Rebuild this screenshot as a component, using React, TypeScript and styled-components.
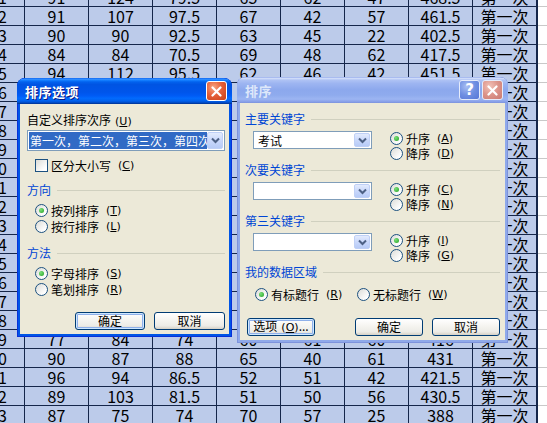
import React from 'react';
import styled, { createGlobalStyle, css } from 'styled-components';

const GlobalStyle = createGlobalStyle`
  *, *::before, *::after { box-sizing: border-box; }
  html, body { margin: 0; padding: 0; background: #fff; overflow: hidden; }
  body { font-family: "Noto Sans CJK SC", "Noto Sans", sans-serif; }
`;

const Screen = styled.div`
  position: relative;
  width: 547px;
  height: 423px;
  overflow: hidden;
  background: #fff;
`;

/* ---------- spreadsheet behind the dialogs ---------- */

const Sheet = styled.div`
  display: grid;
  grid-template-columns: 25px repeat(7, 64px) 65px 1fr;
  grid-auto-rows: 19px;
  margin-top: -12px;
  font-family: "Noto Sans CJK SC", sans-serif;
  font-size: 16px;
  color: #000;
`;

const Cell = styled.div<{ $lead?: boolean; $last?: boolean }>`
  display: flex;
  align-items: center;
  justify-content: ${p => (p.$lead ? 'flex-start' : 'center')};
  background: #bccbea;
  border-right: ${p => (p.$last ? 2 : 1)}px solid #15264a;
  border-bottom: 1px solid #15264a;
  line-height: 18px;
  overflow: hidden;
  white-space: nowrap;
`;

const RowNo = styled.span`
  margin-left: -2px;
`;

const Blank = styled.div`
  background: #fff;
  border-bottom: 1px solid #c9c9c9;
`;

/* ---------- XP style windows ---------- */

const Window = styled.div<{ $active?: boolean; $x: number; $y: number; $w: number; $h: number }>`
  position: absolute;
  left: ${p => p.$x}px;
  top: ${p => p.$y}px;
  width: ${p => p.$w}px;
  height: ${p => p.$h}px;
  display: flex;
  flex-direction: column;
  padding: 0 3px 3px;
  border-radius: 8px 8px 0 0;
  overflow: hidden;
  background: ${p => (p.$active ? '#0055e5' : '#8fa9ea')};
  box-shadow: inset 0 0 0 1px ${p => (p.$active ? '#0831d9' : '#7d93dc')};
  font-size: 12px;
  color: #000;
`;

const TitleBar = styled.div<{ $active?: boolean }>`
  height: 26px;
  margin: 0 -3px;
  padding: 0 5px 0 8px;
  display: flex;
  align-items: center;
  gap: 2px;
  border-radius: 8px 8px 0 0;
  background: ${p =>
    p.$active
      ? 'linear-gradient(180deg, #0058ee 0%, #3a93ff 4%, #127dff 9%, #0262ee 15%, #0054e3 25%, #0055eb 55%, #005bf5 68%, #026afe 78%, #0062ef 87%, #0052d6 93%, #0040ab 97%, #003092 100%)'
      : 'linear-gradient(180deg, #8fa6ea 0%, #d2defa 5%, #aec2f4 12%, #9db5f1 25%, #8ca8ed 50%, #8fabee 70%, #9cb5f2 85%, #8aa2ea 94%, #7c92dc 100%)'};
`;

const Title = styled.span<{ $active?: boolean }>`
  flex: 1;
  font-size: 13px;
  font-weight: bold;
  color: ${p => (p.$active ? '#fff' : '#dde7fa')};
  text-shadow: ${p => (p.$active ? '1px 1px 0 #0a1883' : 'none')};
  letter-spacing: 0.5px;
`;

const CaptionButton = styled.div<{ $kind: 'close' | 'closeDim' | 'help' }>`
  width: 21px;
  height: 20px;
  display: flex;
  align-items: center;
  justify-content: center;
  border: 1px solid ${p => (p.$kind === 'close' ? '#fff' : '#e6ecfb')};
  border-radius: 3px;
  color: #fff;
  font-family: "DejaVu Sans", sans-serif;
  font-weight: bold;
  font-size: 15px;
  ${p =>
    p.$kind === 'close'
      ? css`background: radial-gradient(circle at 35% 30%, #f7a582 0%, #e5603a 45%, #c93f17 100%);`
      : p.$kind === 'closeDim'
      ? css`background: radial-gradient(circle at 35% 30%, #f2c2b8 0%, #dc9389 50%, #c97a72 100%);`
      : css`background: radial-gradient(circle at 35% 30%, #a9bff3 0%, #6f8fe2 50%, #5676d6 100%);`}
`;

const XIcon = () => (
  <svg width="11" height="11" viewBox="0 0 11 11">
    <path d="M1.5 1.5 L9.5 9.5 M9.5 1.5 L1.5 9.5" stroke="#fff" strokeWidth="2.2" strokeLinecap="round" />
  </svg>
);

const Body = styled.div<{ $pad: string }>`
  flex: 1;
  display: flex;
  flex-direction: column;
  background: #ece9d8;
  padding: ${p => p.$pad};
`;

const Label = styled.div<{ $mt?: number }>`
  height: 14px;
  line-height: 14px;
  margin-top: ${p => p.$mt ?? 0}px;
  white-space: nowrap;
`;

const GroupHeader = styled.div<{ $mt?: number }>`
  display: flex;
  align-items: center;
  height: 14px;
  line-height: 14px;
  margin-top: ${p => p.$mt ?? 0}px;
  color: #0046d5;
  white-space: nowrap;
  &::after {
    content: '';
    flex: 1;
    height: 1px;
    margin-left: 6px;
    background: #d0d0bf;
  }
`;

const Combo = styled.div<{ $w: number; $h: number; $mt?: number; $ml?: number }>`
  display: flex;
  width: ${p => p.$w}px;
  height: ${p => p.$h}px;
  margin-top: ${p => p.$mt ?? 0}px;
  margin-left: ${p => p.$ml ?? 0}px;
  padding: 1px;
  border: 1px solid #7f9db9;
  background: #fff;
  flex-shrink: 0;
`;

const ComboText = styled.div<{ $sel?: boolean }>`
  flex: 1;
  display: flex;
  align-items: center;
  padding-left: ${p => (p.$sel ? 1 : 3)}px;
  overflow: hidden;
  white-space: nowrap;
  background: ${p => (p.$sel ? '#316ac5' : 'transparent')};
  color: ${p => (p.$sel ? '#fff' : '#000')};
`;

const ComboButton = styled.div`
  width: 16px;
  flex-shrink: 0;
  display: flex;
  align-items: center;
  justify-content: center;
  border: 1px solid #bfd0f6;
  border-radius: 2px;
  background: linear-gradient(180deg, #e3ebfd 0%, #c9d8fb 50%, #b7cbf7 100%);
`;

const Chevron = () => (
  <svg width="9" height="7" viewBox="0 0 9 7">
    <path d="M1 1.5 L4.5 5 L8 1.5" fill="none" stroke="#4d6185" strokeWidth="2" />
  </svg>
);

const OptionRow = styled.div<{ $mt?: number; $ml?: number }>`
  display: flex;
  align-items: center;
  gap: 3px;
  height: 14px;
  margin-top: ${p => p.$mt ?? 0}px;
  margin-left: ${p => p.$ml ?? 0}px;
  white-space: nowrap;
`;

const Radio = styled.span<{ $on?: boolean }>`
  width: 13px;
  height: 13px;
  flex-shrink: 0;
  display: flex;
  align-items: center;
  justify-content: center;
  border: 1px solid #1c5180;
  border-radius: 50%;
  background: linear-gradient(135deg, #dcdcd7 0%, #fff 80%);
  &::after {
    content: '';
    width: 5px;
    height: 5px;
    border-radius: 50%;
    background: ${p => (p.$on ? 'radial-gradient(circle at 35% 35%, #7be07a, #21a121)' : 'transparent')};
  }
`;

const Check = styled.span`
  width: 13px;
  height: 13px;
  flex-shrink: 0;
  border: 1px solid #1c5180;
  background: linear-gradient(135deg, #dcdcd7 0%, #fff 80%);
`;

const ButtonRow = styled.div<{ $mt: number; $split?: boolean }>`
  display: flex;
  justify-content: ${p => (p.$split ? 'space-between' : 'flex-end')};
  margin-top: ${p => p.$mt}px;
  padding-left: ${p => (p.$split ? 2 : 0)}px;
`;

const ButtonGroup = styled.div`
  display: flex;
  gap: 9px;
`;

const Button = styled.button<{ $w: number; $focus?: boolean }>`
  width: ${p => p.$w}px;
  height: 18px;
  padding: 0;
  font: inherit;
  font-size: 12px;
  line-height: 14px;
  color: #000;
  border: 1px solid #003c74;
  border-radius: 3px;
  background: linear-gradient(180deg, #ffffff 0%, #f4f3ee 50%, #ecebe6 80%, #d6d0c5 100%);
  ${p => p.$focus && css`box-shadow: inset 0 0 0 1px #cee7ff, inset 0 0 0 2px #8fb0ea;`}
`;

const KeyRow = styled.div`
  display: flex;
  align-items: flex-start;
  margin-top: 5px;
`;

const RadioCol = styled.div`
  display: flex;
  flex-direction: column;
  gap: 1px;
  margin-left: 18px;
`;

const InlineOptions = styled.div`
  display: flex;
  margin-top: 8px;
  margin-left: 10px;
`;

const OptionSlot = styled.div<{ $w: number }>`
  width: ${p => p.$w}px;
`;

const Mnemonic = styled.span`
  margin-left: 4px;
  font-family: "DejaVu Sans", sans-serif;
  font-size: 11px;
  letter-spacing: 0;
  u {
    text-underline-offset: 1px;
  }
`;

const Key = ({ k }: { k: string }) => (
  <Mnemonic>
    (<u>{k}</u>)
  </Mnemonic>
);

/* ---------- data ---------- */

const rows: number[][] = [
  [91, 124, 79.5, 65, 62, 47, 468.5],
  [91, 107, 97.5, 67, 42, 57, 461.5],
  [90, 90, 92.5, 63, 45, 22, 402.5],
  [84, 84, 70.5, 69, 48, 62, 417.5],
  [94, 112, 95.5, 62, 46, 42, 451.5],
  [88, 96, 90, 66, 52, 55, 447],
  [79, 101, 84.5, 58, 49, 60, 431.5],
  [93, 88, 91, 70, 44, 51, 437],
  [86, 99, 77.5, 61, 53, 48, 424.5],
  [92, 110, 89, 64, 47, 58, 460],
  [81, 93, 82.5, 59, 50, 46, 411.5],
  [95, 105, 93, 68, 55, 52, 468],
  [83, 91, 76, 62, 41, 49, 402],
  [89, 98, 87.5, 57, 54, 63, 448.5],
  [78, 86, 80, 60, 46, 44, 394],
  [90, 104, 85.5, 65, 51, 59, 454.5],
  [85, 97, 88, 63, 48, 50, 431],
  [87, 92, 79.5, 66, 43, 57, 424.5],
  [77, 84, 74, 60, 61, 60, 416],
  [90, 87, 88, 65, 40, 61, 431],
  [96, 94, 86.5, 52, 51, 42, 421.5],
  [89, 103, 81.5, 51, 50, 56, 430.5],
  [87, 75, 74, 70, 57, 25, 388],
];

export default function App() {
  return (
    <Screen>
      <GlobalStyle />
      <Sheet>
        {rows.map((r, i) => (
          <React.Fragment key={i}>
            <Cell $lead>
              <RowNo>{(i + 1) % 10}</RowNo>
            </Cell>
            {r.map((v, j) => (
              <Cell key={j}>{v}</Cell>
            ))}
            <Cell $last>第一次</Cell>
            <Blank />
          </React.Fragment>
        ))}
      </Sheet>

      {/* 排序选项 */}
      <Window $active $x={17} $y={78} $w={215} $h={259}>
        <TitleBar $active>
          <Title $active>排序选项</Title>
          <CaptionButton $kind="close">
            <XIcon />
          </CaptionButton>
        </TitleBar>
        <Body $pad="9px 4px 4px 7px">
          <Label>
            自定义排序次序<Key k="U" />
          </Label>
          <Combo $w={198} $h={21} $mt={3}>
            <ComboText $sel>第一次，第二次，第三次，第四次</ComboText>
            <ComboButton>
              <Chevron />
            </ComboButton>
          </Combo>
          <OptionRow $mt={7} $ml={8}>
            <Check />
            区分大小写<Key k="C" />
          </OptionRow>
          <GroupHeader $mt={11}>方向</GroupHeader>
          <OptionRow $mt={6} $ml={8}>
            <Radio $on />
            按列排序<Key k="T" />
          </OptionRow>
          <OptionRow $mt={2} $ml={8}>
            <Radio />
            按行排序<Key k="L" />
          </OptionRow>
          <GroupHeader $mt={13}>方法</GroupHeader>
          <OptionRow $mt={6} $ml={8}>
            <Radio $on />
            字母排序<Key k="S" />
          </OptionRow>
          <OptionRow $mt={2} $ml={8}>
            <Radio />
            笔划排序<Key k="R" />
          </OptionRow>
          <ButtonRow $mt={16}>
            <ButtonGroup>
              <Button $w={70} $focus>确定</Button>
              <Button $w={71}>取消</Button>
            </ButtonGroup>
          </ButtonRow>
        </Body>
      </Window>

      {/* 排序 */}
      <Window $x={237} $y={77} $w={271} $h={266}>
        <TitleBar>
          <Title>排序</Title>
          <CaptionButton $kind="help">?</CaptionButton>
          <CaptionButton $kind="closeDim">
            <XIcon />
          </CaptionButton>
        </TitleBar>
        <Body $pad="9px 5px 4px 5px">
          <GroupHeader>主要关键字</GroupHeader>
          <KeyRow>
            <Combo $w={119} $h={18} $ml={8}>
              <ComboText>考试</ComboText>
              <ComboButton>
                <Chevron />
              </ComboButton>
            </Combo>
            <RadioCol>
              <OptionRow>
                <Radio $on />
                升序<Key k="A" />
              </OptionRow>
              <OptionRow>
                <Radio />
                降序<Key k="D" />
              </OptionRow>
            </RadioCol>
          </KeyRow>

          <GroupHeader $mt={3}>次要关键字</GroupHeader>
          <KeyRow>
            <Combo $w={119} $h={18} $ml={8}>
              <ComboText />
              <ComboButton>
                <Chevron />
              </ComboButton>
            </Combo>
            <RadioCol>
              <OptionRow>
                <Radio $on />
                升序<Key k="C" />
              </OptionRow>
              <OptionRow>
                <Radio />
                降序<Key k="N" />
              </OptionRow>
            </RadioCol>
          </KeyRow>

          <GroupHeader $mt={3}>第三关键字</GroupHeader>
          <KeyRow>
            <Combo $w={119} $h={18} $ml={8}>
              <ComboText />
              <ComboButton>
                <Chevron />
              </ComboButton>
            </Combo>
            <RadioCol>
              <OptionRow>
                <Radio $on />
                升序<Key k="I" />
              </OptionRow>
              <OptionRow>
                <Radio />
                降序<Key k="G" />
              </OptionRow>
            </RadioCol>
          </KeyRow>

          <GroupHeader $mt={3}>我的数据区域</GroupHeader>
          <InlineOptions>
            <OptionSlot $w={102}>
              <OptionRow>
                <Radio $on />
                有标题行<Key k="R" />
              </OptionRow>
            </OptionSlot>
            <OptionRow>
              <Radio />
              无标题行<Key k="W" />
            </OptionRow>
          </InlineOptions>

          <ButtonRow $mt={17} $split>
            <Button $w={68} $focus>
              选项<Key k="O" />...
            </Button>
            <ButtonGroup>
              <Button $w={68}>确定</Button>
              <Button $w={68}>取消</Button>
            </ButtonGroup>
          </ButtonRow>
        </Body>
      </Window>
    </Screen>
  );
}
